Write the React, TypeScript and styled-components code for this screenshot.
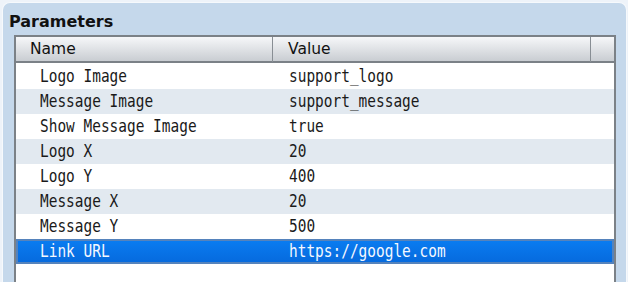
import React from 'react';
import styled, { createGlobalStyle } from 'styled-components';

const rows: [string, string][] = [
  ['Logo Image', 'support_logo'],
  ['Message Image', 'support_message'],
  ['Show Message Image', 'true'],
  ['Logo X', '20'],
  ['Logo Y', '400'],
  ['Message X', '20'],
  ['Message Y', '500'],
  ['Link URL', 'https://google.com'],
];

function App() {
  return (
    <>
      <GlobalStyle />
      <Panel>
        <Title>Parameters</Title>
        <Table>
          <Header>
            <HeadCell $pad={14}>Name</HeadCell>
            <HeadCell $pad={15}>Value</HeadCell>
            <HeadCell $pad={0} />
          </Header>
          <Body>
            {rows.map(([name, value], i) => (
              <Row key={name} $alt={i % 2 === 1} $selected={i === rows.length - 1}>
                <NameCell>
                  <Mono>{name}</Mono>
                </NameCell>
                <ValueCell>
                  <Mono>{value}</Mono>
                </ValueCell>
              </Row>
            ))}
          </Body>
        </Table>
      </Panel>
    </>
  );
}

const GlobalStyle = createGlobalStyle`
  html, body {
    margin: 0;
    padding: 0;
    background: #eef3f9;
    overflow: hidden;
  }
  body {
    font-family: "DejaVu Sans", sans-serif;
  }
`;

const Panel = styled.div`
  margin: 2px 1px 0 2px;
  height: 320px;
  box-sizing: border-box;
  border: 1px solid #f6f9fc;
  border-bottom: none;
  border-radius: 8px 8px 0 0;
  background: #c5d8eb;
  padding: 0 10px 0 0;
`;

const Title = styled.div`
  font-weight: bold;
  font-size: 16px;
  color: #111;
  height: 32px;
  line-height: 38px;
  padding-left: 6px;
`;

const Table = styled.div`
  margin-left: 11px;
  border: 2px solid #7b8187;
  border-bottom: none;
  background: #fff;
  height: 300px;
`;

const Header = styled.div`
  display: grid;
  grid-template-columns: 257px 318px 1fr;
  height: 24px;
  border-bottom: 2px solid #7b8187;
  background: linear-gradient(#f6f7f9, #c9cdd2);
`;

const HeadCell = styled.div<{ $pad: number }>`
  padding-left: ${(p) => p.$pad}px;
  font-size: 15.5px;
  line-height: 25px;
  color: #111;
  border-right: 1px solid #888e94;
  &:last-child {
    border-right: none;
  }
`;

const Body = styled.div`
  padding-top: 1px;
`;

const Row = styled.div<{ $alt: boolean; $selected: boolean }>`
  display: grid;
  grid-template-columns: 258px 1fr;
  height: 25px;
  font-family: "DejaVu Sans Mono", monospace;
  font-size: 17px;
  line-height: 25px;
  color: ${(p) => (p.$selected ? '#f4f8ff' : '#1a1a1a')};
  background: ${(p) =>
    p.$selected ? 'linear-gradient(#0a7df2, #0669dc)' : p.$alt ? '#e2e9f0' : '#ffffff'};
  box-shadow: ${(p) => (p.$selected ? 'inset 0 0 0 2px #5583bc' : 'none')};
`;

const NameCell = styled.div`
  padding-left: 24px;
  white-space: nowrap;
`;

const ValueCell = styled.div`
  padding-left: 15px;
  white-space: nowrap;
`;

const Mono = styled.span`
  display: inline-block;
  transform: scaleX(0.85);
  transform-origin: left center;
`;

export default App;
